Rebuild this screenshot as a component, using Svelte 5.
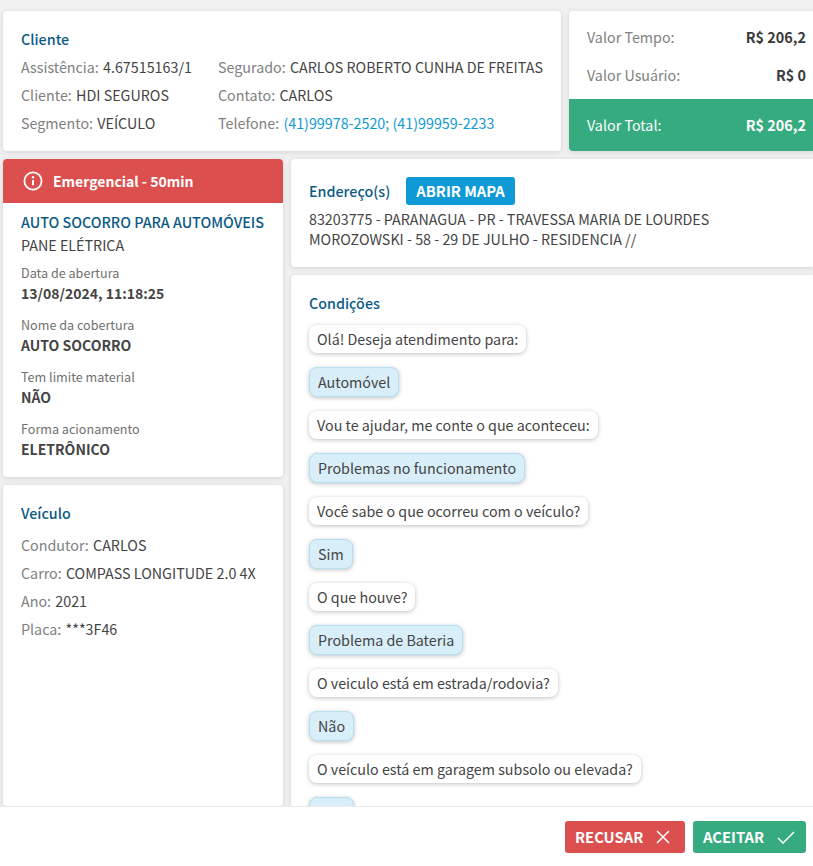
<script>
  const cliente = [
    [["Assistência", "4.67515163/1"], ["Cliente", "HDI SEGUROS"], ["Segmento", "VEÍCULO"]],
    [["Segurado", "CARLOS ROBERTO CUNHA DE FREITAS"], ["Contato", "CARLOS"]],
  ];
  const detalhes = [
    ["Data de abertura", "13/08/2024, 11:18:25"],
    ["Nome da cobertura", "AUTO SOCORRO"],
    ["Tem limite material", "NÃO"],
    ["Forma acionamento", "ELETRÔNICO"],
  ];
  const veiculo = [
    ["Condutor", "CARLOS"],
    ["Carro", "COMPASS LONGITUDE 2.0 4X"],
    ["Ano", "2021"],
    ["Placa", "***3F46"],
  ];
  const conversa = [
    ["Olá! Deseja atendimento para:", false],
    ["Automóvel", true],
    ["Vou te ajudar, me conte o que aconteceu:", false],
    ["Problemas no funcionamento", true],
    ["Você sabe o que ocorreu com o veículo?", false],
    ["Sim", true],
    ["O que houve?", false],
    ["Problema de Bateria", true],
    ["O veiculo está em estrada/rodovia?", false],
    ["Não", true],
    ["O veículo está em garagem subsolo ou elevada?", false],
    ["Não", true],
  ];
</script>

<div class="page">
  <div class="content">
    <div class="top">
      <section class="card cliente">
        <h3>Cliente</h3>
        <div class="cols">
          <div class="col first">
            {#each cliente[0] as [k, v]}
              <div class="line"><span class="k">{k}:</span> {v}</div>
            {/each}
          </div>
          <div class="col">
            {#each cliente[1] as [k, v]}
              <div class="line"><span class="k">{k}:</span> {v}</div>
            {/each}
            <div class="line"><span class="k">Telefone:</span> <span class="tel">(41)99978-2520; (41)99959-2233</span></div>
          </div>
        </div>
      </section>
      <section class="card valores">
        <div class="valor v1"><span class="k">Valor Tempo:</span><b>R$ 206,2</b></div>
        <div class="valor v2"><span class="k">Valor Usuário:</span><b>R$ 0</b></div>
        <div class="valor total"><span>Valor Total:</span><b>R$ 206,2</b></div>
      </section>
    </div>

    <div class="main">
      <div class="left">
        <section class="card servico">
          <div class="alerta">
            <svg width="20" height="20" viewBox="0 0 20 20" fill="none" stroke="#fff" stroke-width="1.8">
              <circle cx="10" cy="10" r="8.6" />
              <path d="M10 9v5.2" stroke-width="2" />
              <circle cx="10" cy="6.2" r="1.2" fill="#fff" stroke="none" />
            </svg>
            <span>Emergencial - 50min</span>
          </div>
          <div class="servico-body">
            <h3 class="tipo">AUTO SOCORRO PARA AUTOMÓVEIS</h3>
            <div class="pane">PANE ELÉTRICA</div>
            {#each detalhes as [k, v]}
              <div class="det">
                <small>{k}</small>
                <strong>{v}</strong>
              </div>
            {/each}
          </div>
        </section>
        <section class="card veiculo">
          <h3>Veículo</h3>
          {#each veiculo as [k, v]}
            <div class="line"><span class="k">{k}:</span> {v}</div>
          {/each}
        </section>
      </div>

      <div class="right">
        <section class="card endereco">
          <div class="end-head">
            <h3>Endereço(s)</h3>
            <button class="mapa">ABRIR MAPA</button>
          </div>
          <p>83203775 - PARANAGUA - PR - TRAVESSA MARIA DE LOURDES<br />MOROZOWSKI - 58 - 29 DE JULHO - RESIDENCIA //</p>
        </section>
        <section class="card condicoes">
          <h3>Condições</h3>
          <div class="chat">
            {#each conversa as [texto, resposta]}
              <div class="bubble" class:resposta>{texto}</div>
            {/each}
          </div>
        </section>
      </div>
    </div>
  </div>

  <footer>
    <button class="acao recusar">
      RECUSAR
      <svg width="14" height="14" viewBox="0 0 14 14" fill="none" stroke="#fff" stroke-width="1.5"><path d="M1 1l12 12M13 1L1 13" /></svg>
    </button>
    <button class="acao aceitar">
      ACEITAR
      <svg width="18" height="13" viewBox="0 0 18 13" fill="none" stroke="#fff" stroke-width="1.5"><path d="M1 7l5 5L17 1" /></svg>
    </button>
  </footer>
</div>

<style>
  :global(body) {
    margin: 0;
    background: #f0f0f0;
  }

  .page {
    height: 866px;
    display: flex;
    flex-direction: column;
    overflow: hidden;
    font-family: "Noto Sans CJK JP", "Noto Sans", sans-serif;
    font-size: 14.3px;
    line-height: 20px;
    color: #444;
  }

  .content {
    flex: 1;
    min-height: 0;
    overflow: hidden;
    padding: 11px 0 0 3px;
    display: flex;
    flex-direction: column;
    gap: 8px;
  }

  .card {
    background: #fff;
    border-radius: 4px;
    box-shadow: 0 1px 5px rgba(0, 0, 0, 0.12);
  }

  h3 {
    margin: 0;
    font-size: 14.3px;
    line-height: 20px;
    font-weight: 500;
    color: #0b5a86;
  }

  .k {
    color: #808080;
  }

  .line .k {
    margin-right: 1px;
  }

  .top {
    display: flex;
    gap: 8px;
    height: 140px;
    flex: none;
  }

  .cliente {
    width: 558px;
    box-sizing: border-box;
    padding: 18px 18px 0;
  }

  .cols {
    display: flex;
    margin-top: 4px;
  }

  .col.first {
    width: 197px;
  }

  .line {
    height: 28px;
    line-height: 28px;
    white-space: nowrap;
  }

  .tel {
    color: #0f9ad6;
  }

  .valores {
    flex: 1;
    overflow: hidden;
    border-radius: 4px 0 0 4px;
    display: flex;
    flex-direction: column;
  }

  .valor {
    display: flex;
    justify-content: space-between;
    align-items: center;
    padding: 0 7px 0 18px;
  }

  .valor b {
    font-size: 14.4px;
    font-weight: 700;
    color: #3a3a3a;
  }

  .v1 {
    height: 50px;
    padding-top: 2px;
    box-sizing: border-box;
  }

  .v2 {
    height: 28px;
  }

  .total {
    margin-top: auto;
    height: 52px;
    background: #36ab80;
    color: #fff;
  }

  .total b {
    color: #fff;
  }

  .main {
    flex: 1;
    min-height: 0;
    display: flex;
    gap: 8px;
  }

  .left {
    width: 280px;
    flex: none;
    display: flex;
    flex-direction: column;
    gap: 8px;
  }

  .right {
    flex: 1;
    min-width: 0;
    display: flex;
    flex-direction: column;
    gap: 8px;
  }

  .servico {
    height: 318px;
    flex: none;
    overflow: hidden;
  }

  .alerta {
    height: 44px;
    background: #dc4f4f;
    color: #fff;
    display: flex;
    align-items: center;
    gap: 10px;
    padding-left: 20px;
    font-size: 14px;
    font-weight: 700;
  }

  .servico-body {
    padding: 9px 18px 0;
  }

  .tipo {
    white-space: nowrap;
  }

  .pane {
    margin-top: 3px;
    margin-bottom: 9px;
  }

  .det {
    margin-bottom: 12px;
  }

  .det small {
    display: block;
    font-size: 12.6px;
    line-height: 18px;
    color: #707070;
  }

  .det strong {
    display: block;
    line-height: 22px;
    font-size: 14px;
    font-weight: 700;
    color: #444;
  }

  .veiculo {
    flex: 1;
    padding: 18px 18px 0;
  }

  .veiculo h3 {
    margin-bottom: 8px;
  }

  .endereco {
    height: 108px;
    flex: none;
    box-sizing: border-box;
    padding: 18px 18px 0;
    border-radius: 4px 0 0 4px;
  }

  .end-head {
    display: flex;
    align-items: center;
    gap: 16px;
  }

  .mapa {
    height: 28px;
    padding: 0 10px;
    border: 0;
    border-radius: 3px;
    background: #0f9ad6;
    color: #fff;
    font: inherit;
    font-size: 14.8px;
    font-weight: 700;
  }

  .endereco p {
    margin: 4px 0 0;
    line-height: 20px;
    white-space: nowrap;
  }

  .condicoes {
    flex: 1;
    min-height: 0;
    padding: 18px 18px 0;
    border-radius: 4px 0 0 0;
  }

  .chat {
    margin-top: 12px;
    display: flex;
    flex-direction: column;
    align-items: flex-start;
    gap: 15px;
  }

  .bubble {
    height: 28px;
    line-height: 28px;
    padding: 0 8px;
    border-radius: 8px;
    background: #fff;
    box-sizing: border-box;
    white-space: nowrap;
    box-shadow: 0 1px 4px rgba(0, 0, 0, 0.25);
  }

  .bubble.resposta {
    height: 30px;
    margin: -1px 0;
    line-height: 28px;
    background: #d8eef8;
    border: 1px solid #b5e0f3;
    box-shadow: 0 1px 4px rgba(0, 0, 0, 0.25);
  }

  footer {
    height: 60px;
    flex: none;
    box-sizing: border-box;
    background: #fff;
    border-top: 1px solid #eaeaea;
    position: relative;
    display: flex;
    justify-content: flex-end;
    gap: 8px;
    padding: 14px 7px 0 0;
  }

  .acao {
    height: 32px;
    border: 0;
    border-radius: 3px;
    color: #fff;
    font: inherit;
    font-size: 14.8px;
    font-weight: 700;
    display: flex;
    align-items: center;
    gap: 13px;
    padding: 0 10px;
  }

  .recusar {
    width: 120px;
    background: #dc4f4f;
  }

  .aceitar {
    width: 113px;
    background: #36ab80;
  }
</style>
